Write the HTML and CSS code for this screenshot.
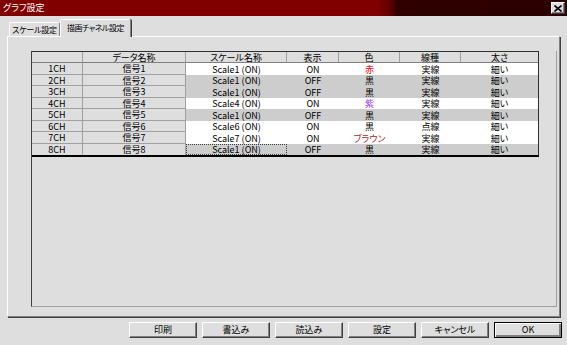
FILE: index.html
```html
<!DOCTYPE html>
<html lang="ja">
<head>
    <meta charset="UTF-8">
    <title>グラフ設定</title>
    <link rel="stylesheet" href="styles.css">
</head>
<body>
    <div class="window">
        <div class="titlebar">
            <span class="title">グラフ設定</span>
            <span class="close">
                <svg width="8" height="7" viewBox="0 0 8 7"><path d="M0.5 0.5 L7.5 6.5 M7.5 0.5 L0.5 6.5" stroke="#000" stroke-width="1.6" fill="none"/></svg>
            </span>
        </div>

        <div class="tabs">
            <div class="tab">スケール設定</div>
            <div class="tab active">描画チャネル設定</div>
        </div>

        <div class="panel">
            <div class="grid">
                <div class="sheet">
                    <div class="row head">
                        <div class="cell"></div>
                        <div class="cell">データ名称</div>
                        <div class="cell">スケール名称</div>
                        <div class="cell">表示</div>
                        <div class="cell">色</div>
                        <div class="cell">線種</div>
                        <div class="cell">太さ</div>
                    </div>
                    <div class="row on">
                        <div class="cell fixed">1CH</div>
                        <div class="cell fixed">信号1</div>
                        <div class="cell val">Scale1 (ON)</div>
                        <div class="cell val">ON</div>
                        <div class="cell val red">赤</div>
                        <div class="cell val">実線</div>
                        <div class="cell val">細い</div>
                    </div>
                    <div class="row off">
                        <div class="cell fixed">2CH</div>
                        <div class="cell fixed">信号2</div>
                        <div class="cell val">Scale1 (ON)</div>
                        <div class="cell val">OFF</div>
                        <div class="cell val">黒</div>
                        <div class="cell val">実線</div>
                        <div class="cell val">細い</div>
                    </div>
                    <div class="row off">
                        <div class="cell fixed">3CH</div>
                        <div class="cell fixed">信号3</div>
                        <div class="cell val">Scale1 (ON)</div>
                        <div class="cell val">OFF</div>
                        <div class="cell val">黒</div>
                        <div class="cell val">実線</div>
                        <div class="cell val">細い</div>
                    </div>
                    <div class="row on">
                        <div class="cell fixed">4CH</div>
                        <div class="cell fixed">信号4</div>
                        <div class="cell val">Scale4 (ON)</div>
                        <div class="cell val">ON</div>
                        <div class="cell val purple">紫</div>
                        <div class="cell val">実線</div>
                        <div class="cell val">細い</div>
                    </div>
                    <div class="row off">
                        <div class="cell fixed">5CH</div>
                        <div class="cell fixed">信号5</div>
                        <div class="cell val">Scale1 (ON)</div>
                        <div class="cell val">OFF</div>
                        <div class="cell val">黒</div>
                        <div class="cell val">実線</div>
                        <div class="cell val">細い</div>
                    </div>
                    <div class="row on">
                        <div class="cell fixed">6CH</div>
                        <div class="cell fixed">信号6</div>
                        <div class="cell val">Scale6 (ON)</div>
                        <div class="cell val">ON</div>
                        <div class="cell val">黒</div>
                        <div class="cell val">点線</div>
                        <div class="cell val">細い</div>
                    </div>
                    <div class="row on">
                        <div class="cell fixed">7CH</div>
                        <div class="cell fixed">信号7</div>
                        <div class="cell val">Scale7 (ON)</div>
                        <div class="cell val">ON</div>
                        <div class="cell val brown">ブラウン</div>
                        <div class="cell val">実線</div>
                        <div class="cell val">細い</div>
                    </div>
                    <div class="row off last">
                        <div class="cell fixed">8CH</div>
                        <div class="cell fixed">信号8</div>
                        <div class="cell val focus">Scale1 (ON)</div>
                        <div class="cell val">OFF</div>
                        <div class="cell val">黒</div>
                        <div class="cell val">実線</div>
                        <div class="cell val">細い</div>
                    </div>
                </div>
            </div>
        </div>

        <div class="buttons">
            <button class="btn">印刷</button>
            <button class="btn">書込み</button>
            <button class="btn">読込み</button>
            <button class="btn">設定</button>
            <button class="btn">キャンセル</button>
            <button class="btn default">OK</button>
        </div>
    </div>
</body>
</html>
```

FILE: styles.css
```css
body {
    margin: 0;
    padding: 0;
    font-family: "Noto Sans CJK JP", sans-serif;
    font-size: 9px;
    font-feature-settings: "palt";
    color: #000;
}

.window {
    width: 567px;
    height: 345px;
    background-color: #dedede;
    display: flex;
    flex-direction: column;
    overflow: hidden;
}

/* title bar */
.titlebar {
    height: 16px;
    display: flex;
    align-items: center;
    padding: 0 2px 0 3px;
    color: #fff;
    background: linear-gradient(to right, #800000 0, #800000 376px, #6a0000 388px, #300000 398px, #2c0000 100%);
}

.title {
    line-height: 12px;
}

.close {
    margin-left: auto;
    width: 14px;
    height: 12px;
    box-sizing: border-box;
    background-color: #dedede;
    border: 1px solid;
    border-color: #fff #404040 #404040 #fff;
    box-shadow: inset -1px -1px 0 #808080;
    display: flex;
    align-items: center;
    justify-content: center;
}

/* tabs */
.tabs {
    height: 20px;
    display: flex;
    align-items: flex-end;
    padding-left: 9px;
    position: relative;
    z-index: 1;
}

.tab {
    width: 51px;
    height: 14px;
    box-sizing: border-box;
    border: 1px solid;
    border-bottom: none;
    border-color: #fff #808080 transparent #fff;
    border-radius: 2px 2px 0 0;
    display: flex;
    align-items: center;
    justify-content: center;
    white-space: nowrap;
    font-size: 8px;
    letter-spacing: -0.2px;
    line-height: 10px;
}

.tab.active {
    width: 71px;
    height: 18px;
    margin-bottom: -1px;
    padding-bottom: 2px;
    letter-spacing: -0.5px;
    background-color: #dedede;
    box-shadow: 1px 0 0 #404040;
}

/* tab page */
.panel {
    height: 281px;
    margin: 0 7px;
    box-sizing: border-box;
    border: 1px solid;
    border-color: #fff #808080 #808080 #fff;
    box-shadow: 1px 1px 0 #404040;
    padding: 14px 2px 9px 23px;
    display: flex;
}

.grid {
    flex: 1;
    border-left: 1px solid #404040;
    border-right: 1px solid #a0a0a0;
    border-bottom: 1px solid #a0a0a0;
    display: flex;
    align-items: flex-start;
}

.sheet {
    display: grid;
    grid-template-columns: 51px 103px 101px 52px 61px 61px 77px;
    grid-template-rows: 11px 12px 11px 12px 11px 12px 11px 12px 11px;
    border-top: 1px solid #303030;
    border-right: 1px solid #303030;
    border-bottom: 2px solid #000;
}

.row {
    display: contents;
}

.cell {
    box-sizing: border-box;
    display: flex;
    align-items: center;
    justify-content: center;
    white-space: nowrap;
    line-height: 9px;
}

.head .cell {
    border-right: 1px solid #a0a0a0;
    border-bottom: 1px solid #808080;
}

.head .cell:last-child {
    border-right: none;
}

.fixed {
    border-right: 1px solid #a0a0a0;
    border-bottom: 1px solid #a0a0a0;
}

.last .fixed {
    border-bottom: none;
}

.on .val {
    background-color: #fff;
}

.off .val {
    background-color: #cdcdcd;
}

.focus {
    outline: 1px dotted #404040;
    outline-offset: -1px;
}

.red {
    color: #ff0000;
}

.purple {
    color: #9a33ff;
}

.brown {
    color: #a52a2a;
}

/* bottom buttons */
.buttons {
    display: flex;
    justify-content: flex-end;
    gap: 5px;
    padding: 5px 5px 0 0;
}

.btn {
    width: 68px;
    height: 16px;
    box-sizing: border-box;
    padding: 0;
    font: inherit;
    line-height: 10px;
    color: #000;
    background-color: #dedede;
    border: 1px solid;
    border-color: #fff #404040 #404040 #fff;
    box-shadow: inset -1px -1px 0 #808080;
}

.btn.default {
    border-color: #000;
    box-shadow: inset 1px 1px 0 #fff, inset -2px -2px 0 #808080;
}
```
